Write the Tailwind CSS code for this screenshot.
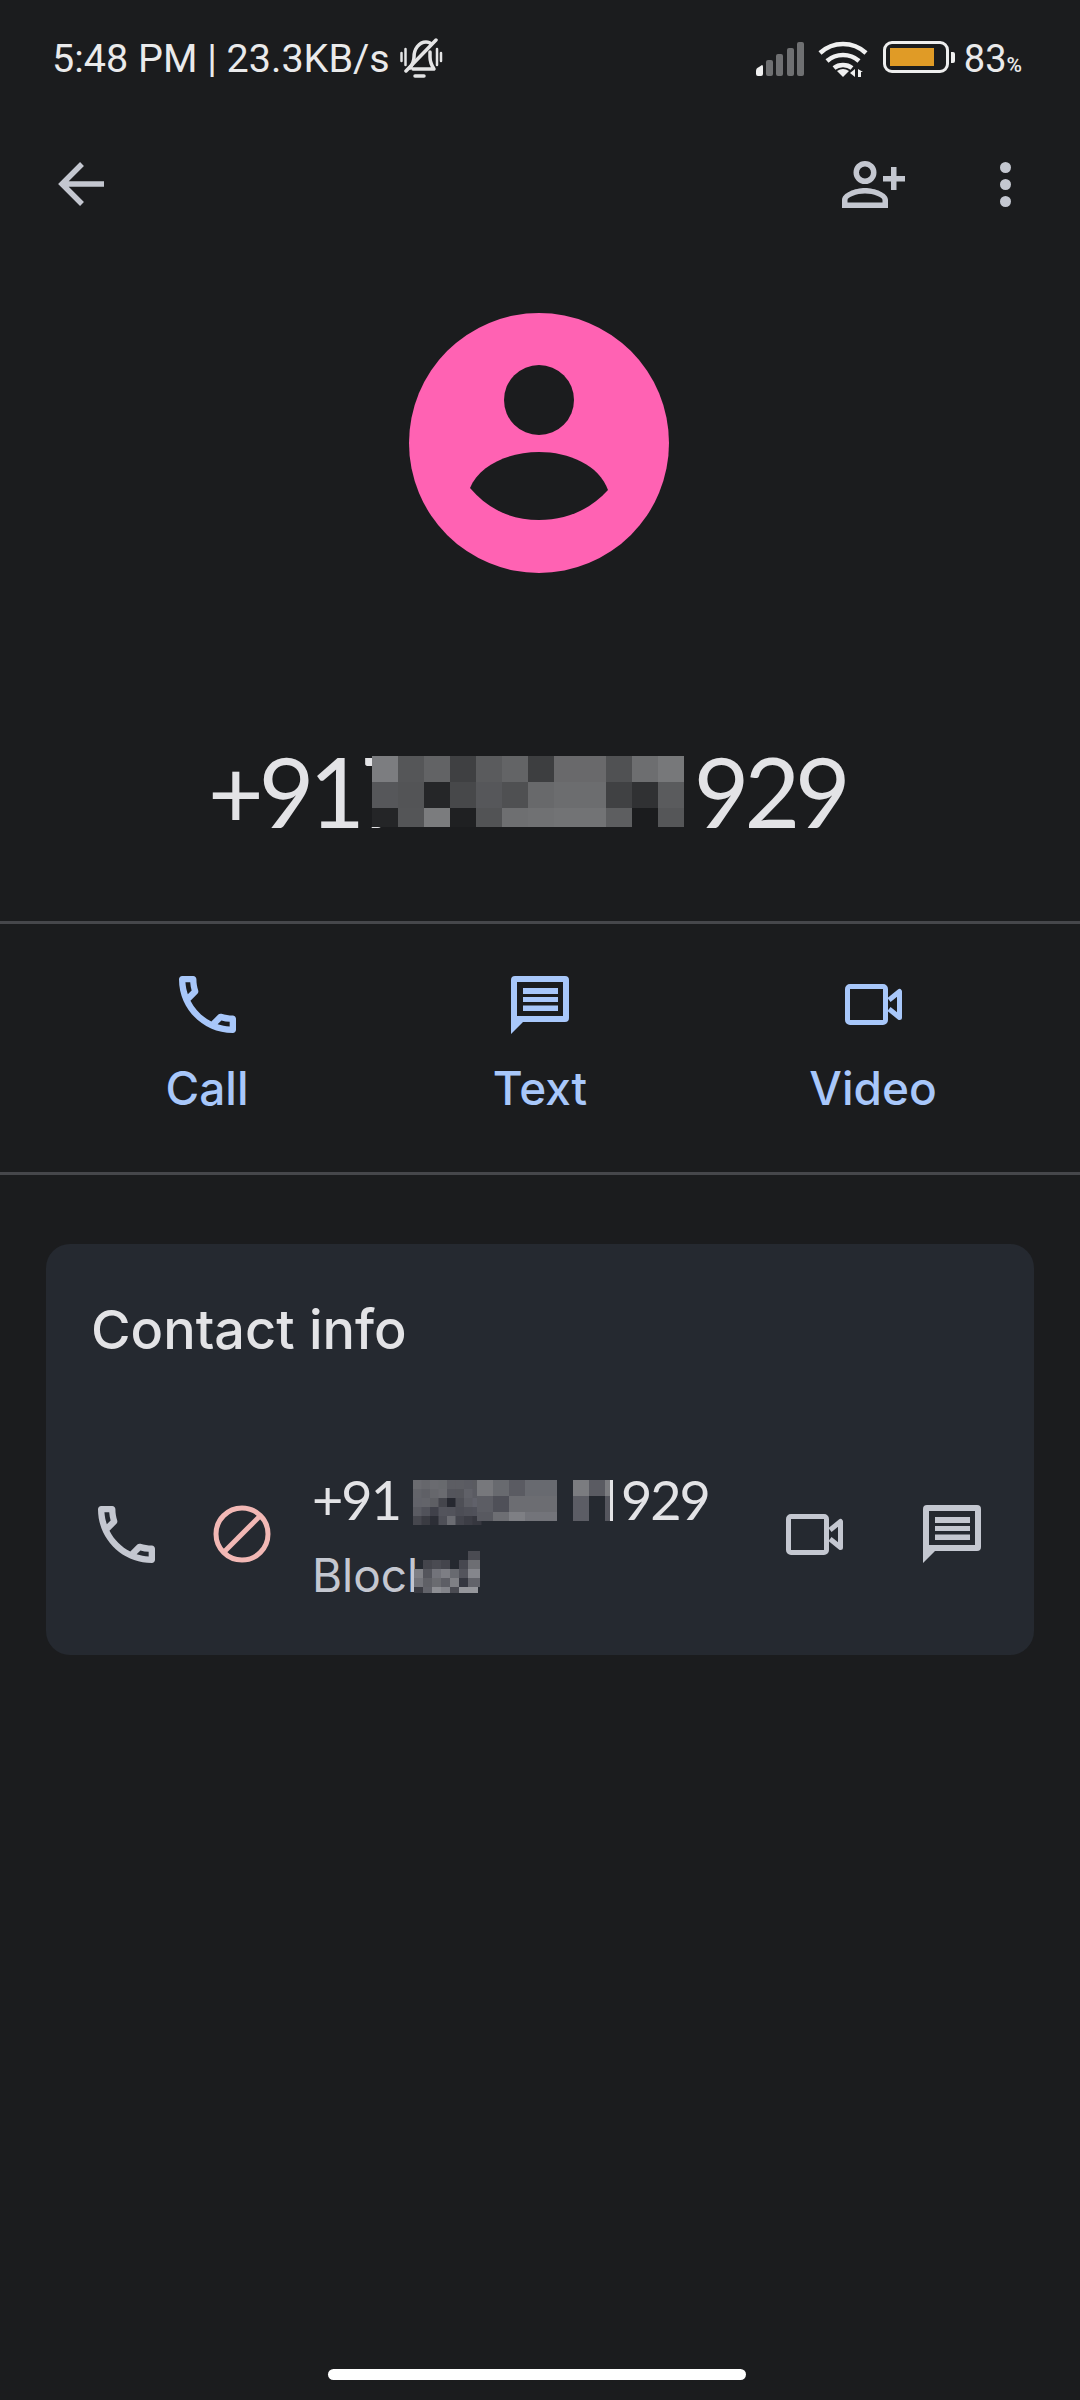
<!DOCTYPE html>
<html lang="en">
<head>
    <meta charset="UTF-8">
    <meta name="viewport" content="width=device-width, initial-scale=1.0">
    <title>Contact</title>
    <script src="https://cdn.jsdelivr.net/npm/@tailwindcss/browser@4"></script>
</head>
<body class="bg-[#1b1c1e]">
<div class="w-[1080px] h-[2400px] flex flex-col overflow-hidden font-['Roboto',sans-serif]">

    <!-- Status bar -->
    <div class="h-[120px] flex justify-between items-start pt-[36px] pl-[52px] pr-[58px] text-[#eaeaeb] text-[39.5px] leading-[46px]">
        <div class="flex items-start gap-[10px]">
            <span>5:48 PM | 23.3KB/s</span>
            <svg width="44" height="42" viewBox="0 0 44 42" fill="none" stroke="#e4e4e5" stroke-width="3.5" stroke-linecap="round" stroke-linejoin="round" class="mt-[2px]">
                <path d="M10 30c2-3 4-6 4-11 0-8 5-15 12-15 2 0 4 .6 5 2M30 14v5c0 6 2 9 4 12H13"/>
                <path d="M15 38h9"/>
                <path d="M6 33 36 2"/>
                <path d="M1.500 15v8M5.500 11v16M37 11v16M41 15v8" stroke-width="2.500"/>
            </svg>
        </div>
        <div class="flex items-start text-[38px]">
            <svg width="50" height="34" viewBox="0 0 50 34" class="mr-[13px] mt-[6px]">
                <path d="M1 32v-3q0-3 3-4l3-2q1 0 1 2v7q0 2-2 2H3q-2 0-2-2z" fill="#f0f0f0"/>
                <rect x="11" y="18" width="7" height="16" rx="2" fill="#6f7072"/>
                <rect x="21" y="12" width="7" height="22" rx="2" fill="#6f7072"/>
                <rect x="32" y="6" width="7" height="28" rx="2" fill="#6f7072"/>
                <rect x="42" y="0" width="7" height="34" rx="2" fill="#6f7072"/>
            </svg>
            <svg width="50" height="38" viewBox="0 0 50 38" fill="none" stroke="#f0f0f0" stroke-width="4.500" class="mr-[15px] mt-[4px]">
                <path d="M2 13c13-12 33-12 46 0M9 21c9-8 23-8 32 0M16 28c5-4 13-4 18 0"/>
                <path d="M25 37 19 31q6-4 12 0z" fill="#f0f0f0" stroke="none"/>
                <path d="M37 29v8l-5-4zM40 37v-8l5 3h-2v5z" fill="#f0f0f0" stroke="none"/>
            </svg>
            <div class="w-[66px] h-[32px] mt-[5px] border-[3px] border-[#eeeeee] rounded-[9px] p-[4px] pr-[12px]">
                <div class="w-full h-full bg-[#e09b26]"></div>
            </div>
            <div class="w-[4px] h-[11px] mt-[16px] bg-[#eeeeee] rounded-r-[2px] ml-[2px] mr-[9px]"></div>
            <span>83</span><span class="text-[21px] font-medium leading-[58px]">%</span>
        </div>
    </div>

    <!-- App bar -->
    <div class="h-[128px] flex justify-between items-center pl-[58px] pr-[69px] text-[#c4c7d0]">
        <svg width="46" height="46" viewBox="0 0 46 46" fill="none" stroke="currentColor" stroke-width="5.500">
            <path d="M24 3 4 23l20 20M5 23h41"/>
        </svg>
        <div class="flex items-center gap-[95px]">
            <svg width="63" height="47" viewBox="0 0 63 47" fill="currentColor">
                <path fill-rule="evenodd" d="M23 0a11.500 11.500 0 1 1 0 23 11.500 11.500 0 0 1 0-23zm0 5.500a6 6 0 1 0 0 12 6 6 0 0 0 0-12zM0 47v-8c0-7 13-12 23-12s23 5 23 12v8zm5.500-5.500h35V39c0-3-9-6.500-17.500-6.500S5.500 36 5.500 39z"/>
                <path d="M49 6h5.500v9H63v5.500h-8.500V29H49v-8.500H41V15h8z"/>
            </svg>
            <div class="flex flex-col gap-[6px]">
                <div class="w-[11px] h-[11px] rounded-full bg-current"></div>
                <div class="w-[11px] h-[11px] rounded-full bg-current"></div>
                <div class="w-[11px] h-[11px] rounded-full bg-current"></div>
            </div>
        </div>
    </div>

    <!-- Avatar -->
    <div class="flex justify-center pt-[65px] pr-[2px]">
        <svg width="260" height="260" viewBox="0 0 260 260">
            <circle cx="130" cy="130" r="130" fill="#ff62b3"/>
            <circle cx="130" cy="87" r="35" fill="#1b1c1e"/>
            <path d="M61 175C70 152 100 139 130 139s60 13 69 38c-18 20-42 30-69 30s-50-10-69-32z" fill="#1b1c1e"/>
        </svg>
    </div>

    <!-- Number -->
    <div class="flex items-center mt-[163px] pl-[208px] h-[110px] text-[96px] leading-[110px] tracking-[-5px] text-[#e3e3e6] font-['Lato',sans-serif]">
        <span>+917</span>
        <div class="relative w-[312px] h-[71px] -ml-[39px] mr-[10px] grid grid-cols-[repeat(12,26px)] grid-rows-[26px_26px_19px]">
            <div class="bg-[#7c7d80]"></div><div class="bg-[#555658]"></div><div class="bg-[#626365]"></div><div class="bg-[#3f4042]"></div><div class="bg-[#5a5b5d]"></div><div class="bg-[#636466]"></div><div class="bg-[#3d3e40]"></div><div class="bg-[#69696b]"></div><div class="bg-[#69696b]"></div><div class="bg-[#505153]"></div><div class="bg-[#6d6e70]"></div><div class="bg-[#77787a]"></div>
            <div class="bg-[#56575a]"></div><div class="bg-[#535456]"></div><div class="bg-[#252628]"></div><div class="bg-[#47484a]"></div><div class="bg-[#56575a]"></div><div class="bg-[#4f5052]"></div><div class="bg-[#68696b]"></div><div class="bg-[#6c6d6f]"></div><div class="bg-[#6c6d6f]"></div><div class="bg-[#404143]"></div><div class="bg-[#303133]"></div><div class="bg-[#5a5b5d]"></div>
            <div class="bg-[#242527]"></div><div class="bg-[#545557]"></div><div class="bg-[#7b7c7e]"></div><div class="bg-[#1f2022]"></div><div class="bg-[#525355]"></div><div class="bg-[#6e6f71]"></div><div class="bg-[#707173]"></div><div class="bg-[#727375]"></div><div class="bg-[#727375]"></div><div class="bg-[#5d5e60]"></div><div class="bg-[#1b1c1e]"></div><div class="bg-[#555658]"></div>
        </div>
        <span>929</span>
    </div>

    <!-- Actions -->
    <div class="mt-[75px] h-[254px] border-y-[3px] border-[#46474b] flex text-[#a8c7fa] text-[46px] leading-[54px] font-[450] pt-[52px] font-['Inter',sans-serif]">
        <div class="w-[414px] flex flex-col items-center gap-[28px]">
            <svg width="57" height="57" viewBox="3 3 18 18" fill="currentColor"><path d="M6.540 5c.060.890.210 1.760.450 2.590l-1.200 1.200c-.410-1.200-.670-2.470-.760-3.790h1.510m9.860 12.020c.850.240 1.720.390 2.600.450v1.490c-1.320-.090-2.590-.350-3.800-.750l1.200-1.190M7.500 3H4c-.550 0-1 .450-1 1 0 9.390 7.610 17 17 17 .550 0 1-.450 1-1v-3.490c0-.550-.450-1-1-1-1.240 0-2.450-.200-3.570-.570-.100-.040-.210-.050-.310-.050-.260 0-.510.100-.710.290l-2.200 2.200c-2.830-1.450-5.150-3.760-6.590-6.590l2.200-2.200c.280-.280.360-.670.250-1.020C8.700 6.450 8.500 5.250 8.500 4c0-.550-.450-1-1-1z"/></svg>
            <span>Call</span>
        </div>
        <div class="w-[252px] flex flex-col items-center gap-[28px]">
            <svg width="58" height="58" viewBox="0 0 58 58" fill="currentColor" class="-mb-[1px]"><path fill-rule="evenodd" d="M4 0h50q4 0 4 4v38q0 4-4 4H12L0 58V4q0-4 4-4zm2 6v34h46V6zM12 12h35v6H12zm0 9h35v5H12zm0 8.500h35V35H12z"/></svg>
            <span>Text</span>
        </div>
        <div class="w-[414px] flex flex-col items-center gap-[28px]">
            <div class="h-[57px] flex items-center">
                <svg width="57" height="41" viewBox="0 0 57 41" fill="none" stroke="currentColor" stroke-width="5"><rect x="2.500" y="2.500" width="38" height="36" rx="2.500"/><path d="M44 16 54.500 7.500v26L44 25" stroke-linejoin="round"/></svg>
            </div>
            <span>Video</span>
        </div>
    </div>

    <!-- Contact info card -->
    <div class="mt-[69px] ml-[46px] w-[988px] h-[411px] bg-[#252930] rounded-[24px] pt-[56px] pl-[44px] pr-[53px]">
        <div class="ml-[1px] text-[54px] leading-[60px] font-[450] text-[#e3e3e6] font-['Inter',sans-serif]">Contact info</div>
        <div class="mt-[106px] ml-[8px] flex items-center text-[#c4c7d0]">
            <svg width="57" height="57" viewBox="3 3 18 18" fill="currentColor" class="shrink-0"><path d="M6.540 5c.060.890.210 1.760.450 2.590l-1.200 1.200c-.410-1.200-.670-2.470-.760-3.790h1.510m9.860 12.020c.850.240 1.720.390 2.600.450v1.490c-1.320-.090-2.590-.350-3.800-.750l1.200-1.190M7.500 3H4c-.550 0-1 .450-1 1 0 9.390 7.610 17 17 17 .550 0 1-.450 1-1v-3.490c0-.550-.450-1-1-1-1.240 0-2.450-.200-3.570-.570-.100-.040-.210-.050-.310-.050-.260 0-.510.100-.710.290l-2.200 2.200c-2.830-1.450-5.150-3.760-6.590-6.590l2.200-2.200c.280-.280.360-.670.250-1.020C8.700 6.450 8.500 5.250 8.500 4c0-.550-.450-1-1-1z"/></svg>
            <svg width="58" height="58" viewBox="0 0 58 58" fill="none" stroke="#f2b8b5" stroke-width="5" class="shrink-0 ml-[58px]"><circle cx="29" cy="29" r="26"/><path d="M11 47 47 11"/></svg>

            <div class="ml-[41px] pt-[5px]">
                <div class="flex items-center h-[58px] text-[54px] leading-[58px] tracking-[-2px] text-[#e3e3e6] font-['Lato',sans-serif]">
                    <span>+91</span>
                    <svg width="201" height="46" viewBox="0 0 201 46" class="ml-[12px] mr-[8px] mt-[5px] shrink-0">
                        <g>
                            <rect x="1" y="0" width="9" height="9" fill="#6a6b70"/><rect x="9.500" y="0" width="9" height="9" fill="#66676c"/><rect x="18" y="0" width="9" height="9" fill="#6a6b70"/><rect x="26.500" y="0" width="9" height="9" fill="#686a6e"/><rect x="35" y="0" width="9" height="9" fill="#5c5d63"/><rect x="43.500" y="0" width="9" height="9" fill="#5c5d63"/><rect x="52" y="0" width="9" height="9" fill="#5a5b62"/><rect x="60.500" y="0" width="9" height="9" fill="#5a5b60"/>
                            <rect x="1" y="9" width="9" height="9" fill="#63646a"/><rect x="9.500" y="9" width="9" height="9" fill="#5f6066"/><rect x="18" y="9" width="9" height="9" fill="#66676c"/><rect x="26.500" y="9" width="9" height="9" fill="#6a6b70"/><rect x="35" y="9" width="9" height="9" fill="#54555c"/><rect x="43.500" y="9" width="9" height="9" fill="#54555b"/><rect x="52" y="9" width="9" height="9" fill="#606168"/><rect x="60.500" y="9" width="9" height="9" fill="#5a5b62"/>
                            <rect x="1" y="18" width="9" height="9" fill="#62636a"/><rect x="9.500" y="18" width="9" height="9" fill="#63646a"/><rect x="18" y="18" width="9" height="9" fill="#5e5f64"/><rect x="26.500" y="18" width="9" height="9" fill="#44454c"/><rect x="35" y="18" width="9" height="9" fill="#262830"/><rect x="43.500" y="18" width="9" height="9" fill="#4e4f56"/><rect x="52" y="18" width="9" height="9" fill="#5c5d64"/><rect x="60.500" y="18" width="9" height="9" fill="#60616a"/>
                            <rect x="1" y="27" width="9" height="9" fill="#5a5b62"/><rect x="9.500" y="27" width="9" height="9" fill="#51525a"/><rect x="18" y="27" width="9" height="9" fill="#40414a"/><rect x="26.500" y="27" width="9" height="9" fill="#53545c"/><rect x="35" y="27" width="9" height="9" fill="#52535b"/><rect x="43.500" y="27" width="9" height="9" fill="#4c4d55"/><rect x="52" y="27" width="9" height="9" fill="#4f5058"/><rect x="60.500" y="27" width="9" height="9" fill="#50515a"/>
                            <rect x="1" y="36" width="9" height="9" fill="#46474e"/><rect x="9.500" y="36" width="9" height="9" fill="#3a3b42"/><rect x="18" y="36" width="9" height="9" fill="#2c2e36"/><rect x="26.500" y="36" width="9" height="9" fill="#4e4f57"/><rect x="35" y="36" width="9" height="9" fill="#6b6c72"/><rect x="43.500" y="36" width="9" height="9" fill="#43444c"/><rect x="52" y="36" width="9" height="9" fill="#3c3d45"/><rect x="60.500" y="36" width="9" height="9" fill="#36373f"/>
                        </g>
                        <g>
                            <rect x="65" y="0" width="16" height="16" fill="#77787c"/><rect x="81" y="0" width="16" height="16" fill="#686a6f"/><rect x="97" y="0" width="16" height="16" fill="#5a5b62"/><rect x="113" y="0" width="32" height="16" fill="#686a70"/>
                            <rect x="65" y="16" width="16" height="16" fill="#5c5d64"/><rect x="81" y="16" width="16" height="16" fill="#4f5058"/><rect x="97" y="16" width="48" height="16" fill="#6c6d72"/>
                            <rect x="65" y="32" width="16" height="9" fill="#585960"/><rect x="81" y="32" width="16" height="9" fill="#6d6e73"/><rect x="97" y="32" width="16" height="9" fill="#7e7f84"/><rect x="113" y="32" width="32" height="9" fill="#73747a"/>
                            <rect x="161" y="0" width="16" height="16" fill="#7b7c80"/><rect x="161" y="16" width="16" height="25" fill="#5c5d65"/>
                            <rect x="177" y="0" width="16" height="16" fill="#5a5b62"/>
                            <rect x="193" y="0" width="5" height="16" fill="#7b7c80"/><rect x="193" y="16" width="5" height="25" fill="#55565e"/>
                            <rect x="198" y="0" width="3" height="41" fill="#e3e3e6"/>
                        </g>
                    </svg>
                    <span>929</span>
                </div>
                <div class="relative h-[73px] pt-[19px] text-[46px] leading-[54px] font-['Inter',sans-serif]">
                    <span>Block</span>
                    <svg width="66" height="42" viewBox="0 0 66 42" class="absolute left-[102px] top-[22px]">
                        <rect x="54" y="0" width="12" height="9" fill="#4a4b52"/>
                        <rect x="9" y="9" width="9" height="9" fill="#44454c"/><rect x="18" y="9" width="9" height="9" fill="#4a4b52"/><rect x="27" y="9" width="9" height="9" fill="#44454c"/><rect x="45" y="9" width="9" height="9" fill="#474850"/><rect x="54" y="9" width="12" height="9" fill="#6d6e73"/>
                        <rect x="0" y="18" width="9" height="9" fill="#7f8085"/><rect x="9" y="18" width="9" height="9" fill="#54555c"/><rect x="18" y="18" width="9" height="9" fill="#72737a"/><rect x="27" y="18" width="9" height="9" fill="#7d7e84"/><rect x="36" y="18" width="9" height="9" fill="#686a70"/><rect x="45" y="18" width="9" height="9" fill="#53545c"/><rect x="54" y="18" width="12" height="9" fill="#85868c"/>
                        <rect x="0" y="27" width="9" height="9" fill="#74757b"/><rect x="9" y="27" width="9" height="9" fill="#5f6066"/><rect x="18" y="27" width="9" height="9" fill="#6a6b70"/><rect x="27" y="27" width="9" height="9" fill="#5d5e65"/><rect x="36" y="27" width="9" height="9" fill="#7f8085"/><rect x="45" y="27" width="9" height="9" fill="#353740"/><rect x="54" y="27" width="12" height="9" fill="#62636a"/>
                        <rect x="0" y="36" width="9" height="6" fill="#3a3b42"/><rect x="9" y="36" width="9" height="6" fill="#62636a"/><rect x="18" y="36" width="9" height="6" fill="#8d8e93"/><rect x="27" y="36" width="9" height="6" fill="#83848a"/><rect x="36" y="36" width="9" height="6" fill="#4a4b52"/><rect x="45" y="36" width="19" height="6" fill="#95969b"/>
                    </svg>
                </div>
            </div>

            <svg width="57" height="41" viewBox="0 0 57 41" fill="none" stroke="currentColor" stroke-width="5" class="shrink-0 ml-auto"><rect x="2.500" y="2.500" width="38" height="36" rx="2.500"/><path d="M44 16 54.500 7.500v26L44 25" stroke-linejoin="round"/></svg>
            <svg width="58" height="58" viewBox="0 0 58 58" fill="currentColor" class="shrink-0 ml-[80px]"><path fill-rule="evenodd" d="M4 0h50q4 0 4 4v38q0 4-4 4H12L0 58V4q0-4 4-4zm2 6v34h46V6zM12 12h35v6H12zm0 9h35v5H12zm0 8.500h35V35H12z"/></svg>
        </div>
    </div>

    <!-- Gesture bar -->
    <div class="mt-auto mb-[20px] ml-[328px] w-[418px] h-[11px] rounded-full bg-white"></div>
</div>
</body>
</html>
